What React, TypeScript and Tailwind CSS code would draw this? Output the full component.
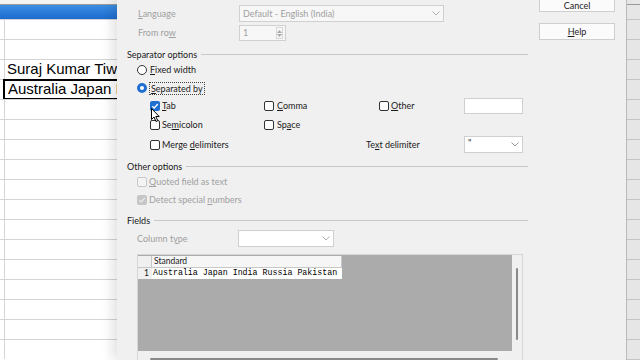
import React from "react";

function Box({ checked = false, disabled = false }: { checked?: boolean; disabled?: boolean }) {
  if (checked && !disabled) {
    return (
      <span className="w-[10px] h-[10px] rounded-[2px] bg-[#1f6fd1] flex items-center justify-center shrink-0">
        <svg width="8" height="8" viewBox="0 0 8 8">
          <path d="M1.3 4.2 L3.2 6 L6.8 2" stroke="#fff" strokeWidth="1.3" fill="none" />
        </svg>
      </span>
    );
  }
  if (checked && disabled) {
    return (
      <span className="w-[10px] h-[10px] rounded-[2px] bg-[#c6c6c6] flex items-center justify-center shrink-0">
        <svg width="8" height="8" viewBox="0 0 8 8">
          <path d="M1.3 4.2 L3.2 6 L6.8 2" stroke="#e8e8e8" strokeWidth="1.3" fill="none" />
        </svg>
      </span>
    );
  }
  return (
    <span
      className={
        disabled
          ? "w-[10px] h-[10px] rounded-[2px] border border-[#c8c8c8] bg-[#f4f4f4] shrink-0"
          : "w-[10px] h-[10px] rounded-[2px] border border-[#333] bg-white shrink-0"
      }
    />
  );
}

function Radio({ checked = false }: { checked?: boolean }) {
  return checked ? (
    <span className="w-[10px] h-[10px] rounded-full border-[3px] border-[#1f6fd1] bg-white shrink-0" />
  ) : (
    <span className="w-[10px] h-[10px] rounded-full border border-[#333] bg-white shrink-0" />
  );
}

function Chevron({ color = "#888" }: { color?: string }) {
  return (
    <svg width="8" height="5" viewBox="0 0 8 5">
      <path d="M0.5 0.5 L4 4 L7.5 0.5" stroke={color} strokeWidth="1" fill="none" />
    </svg>
  );
}

function Heading({ children }: { children: React.ReactNode }) {
  return (
    <div className="h-[15px] flex items-center">
      <span className="text-[#1a1a1a]">{children}</span>
      <span className="flex-1 h-px bg-[#c9c9c9] ml-[4px]" />
    </div>
  );
}

function Sheet() {
  const rows = Array.from({ length: 17 });
  return (
    <div className="w-[117px] h-[360px] bg-white relative overflow-hidden font-['Liberation_Sans',sans-serif] shrink-0">
      <div className="h-[5px] bg-[#f2f2f2] border-b border-[#9a9a9a]" />
      <div className="h-[14px] bg-gradient-to-b from-[#3b8de2] to-[#1b6cd0]" />
      {rows.map((_, i) => (
        <div key={i} className="h-[20px] border-t border-[#d4d4d4] pl-[4px]">
          <div className="h-full border-l border-[#d4d4d4]">
            {i === 2 && (
              <div className="h-full flex items-center pl-[2px] text-[15px] text-black whitespace-nowrap">
                Suraj Kumar Tiwari
              </div>
            )}
            {i === 3 && (
              <div className="h-[21px] -mt-px -ml-[2px] w-[140px] border-2 border-black flex items-center pl-[3px] text-[15px] text-black whitespace-nowrap">
                Australia Japan India
              </div>
            )}
          </div>
        </div>
      ))}
    </div>
  );
}

function RightStrip() {
  const rows = Array.from({ length: 18 });
  return (
    <div className="w-[14px] h-[360px] bg-[#e6e6e6] border-l border-[#bdbdbd] shrink-0 overflow-hidden">
      <div className="h-[5px] border-b border-[#9a9a9a]" />
      <div className="h-[14px]" />
      {rows.map((_, i) => (
        <div key={i} className="h-[20px] border-t border-[#c4c4c4]" />
      ))}
    </div>
  );
}

function Preview() {
  return (
    <div className="ml-[10px] mt-[7px] w-[386px] h-[110px] border border-[#d6d6d6] bg-[#f0f0f0] flex flex-col">
      <div className="flex h-[98px]">
        <div className="w-[374px] h-full bg-[#ababab]">
          <div className="flex h-[12px] mt-[1px]">
            <div className="w-[14px] bg-[#f0f0f0] border-r border-b border-[#c8c8c8]" />
            <div className="w-[190px] bg-[#f6f6f6] border-b border-r border-[#c8c8c8] flex items-center pl-[2px] text-[8.5px] text-[#1a1a1a]">
              Standard
            </div>
          </div>
          <div className="flex h-[11px]">
            <div className="w-[14px] bg-[#f0f0f0] flex items-center justify-end pr-[3px] text-[8.5px] text-[#1a1a1a]">1</div>
            <div className="w-[190px] bg-white flex items-center pl-px font-['Liberation_Mono',monospace] text-[8.3px] text-black whitespace-nowrap overflow-hidden">
              Australia Japan India Russia Pakistan
            </div>
          </div>
        </div>
        <div className="flex-1 flex justify-center pt-[13px]">
          <div className="w-[2px] h-[72px] rounded bg-[#8a8a8a]" />
        </div>
      </div>
      <div className="h-[12px] flex items-center pl-[12px]">
        <div className="w-[348px] h-[2px] rounded bg-[#8a8a8a] mt-[3px]" />
      </div>
    </div>
  );
}

function Dialog() {
  const dis = "text-[#a0a0a0]";
  return (
    <div className="w-[509px] h-[360px] overflow-hidden bg-[#f0f0f0] flex pl-[10px] shrink-0 relative shadow-[-6px_0_10px_rgba(0,0,0,0.10)] font-['Lato',sans-serif] text-[9px] text-[#1a1a1a]">
      <div className="w-[401px] flex flex-col pt-[5px] [&>*]:shrink-0">
        <div className="h-[17px] flex items-center pl-[11px]">
          <span className={`w-[101px] ${dis}`}><u>L</u>anguage</span>
          <div className="w-[205px] h-[17px] border border-[#d0d0d0] bg-[#f7f7f7] flex items-center justify-between px-[3px]">
            <span className={dis}>Default - English (India)</span>
            <Chevron color="#b0b0b0" />
          </div>
        </div>
        <div className="h-[16px] mt-[3px] flex items-center pl-[11px]">
          <span className={`w-[101px] ${dis}`}>From ro<u>w</u></span>
          <div className="w-[47px] h-[16px] border border-[#d0d0d0] bg-[#f7f7f7] flex items-center justify-between pl-[3px] pr-[2px]">
            <span className={dis}>1</span>
            <div className="h-[12px] w-[7px] border border-[#d6d6d6] flex flex-col items-center justify-center gap-[1px]">
              <svg width="5" height="3" viewBox="0 0 5 3"><path d="M0 3 L2.5 0 L5 3Z" fill="#a8a8a8" /></svg>
              <svg width="5" height="3" viewBox="0 0 5 3"><path d="M0 0 L2.5 3 L5 0Z" fill="#a8a8a8" /></svg>
            </div>
          </div>
        </div>
        <div className="mt-[6px]"><Heading>Separator options</Heading></div>
        <div className="h-[16px] flex items-center pl-[10px] gap-[2px]">
          <Radio />
          <span className="ml-[1px]"><u>F</u>ixed width</span>
        </div>
        <div className="h-[18px] mt-[1px] flex items-center pl-[10px] gap-[2px]">
          <Radio checked />
          <span className="px-px border border-dotted border-[#444] leading-[11px]"><u>S</u>eparated by</span>
        </div>
        <div className="h-[16px] mt-[1px] flex items-center pl-[23px]">
          <div className="w-[114px] flex items-center gap-[2px]"><Box checked /><span><u>T</u>ab</span></div>
          <div className="w-[115px] flex items-center gap-[3px]"><Box /><span><u>C</u>omma</span></div>
          <div className="w-[85px] flex items-center gap-[2px]"><Box /><span><u>O</u>ther</span></div>
          <div className="w-[59px] h-[16px] border border-[#cfcfcf] bg-white" />
        </div>
        <div className="h-[16px] mt-[3px] flex items-center pl-[23px]">
          <div className="w-[114px] flex items-center gap-[2px]"><Box /><span>Se<u>m</u>icolon</span></div>
          <div className="w-[115px] flex items-center gap-[3px]"><Box /><span>Sp<u>a</u>ce</span></div>
        </div>
        <div className="h-[17px] mt-[3px] flex items-center pl-[23px]">
          <div className="w-[216px] flex items-center gap-[2px]"><Box /><span>Merge <u>d</u>elimiters</span></div>
          <span className="w-[98px]">Te<u>x</u>t delimiter</span>
          <div className="w-[59px] h-[17px] border border-[#cfcfcf] bg-white flex items-center justify-between px-[3px]">
            <span className="-mt-[3px]">"</span>
            <Chevron color="#999" />
          </div>
        </div>
        <div className="mt-[6px]"><Heading>Other options</Heading></div>
        <div className="h-[16px] flex items-center pl-[10px] gap-[2px]">
          <Box disabled />
          <span className={dis}><u>Q</u>uoted field as text</span>
        </div>
        <div className="h-[16px] mt-[2px] flex items-center pl-[10px] gap-[2px]">
          <Box checked disabled />
          <span className={dis}>Detect special <u>n</u>umbers</span>
        </div>
        <div className="mt-[5px]"><Heading>Fields</Heading></div>
        <div className="h-[17px] mt-[2px] flex items-center pl-[10px]">
          <span className={`w-[101px] ${dis}`}>Column t<u>y</u>pe</span>
          <div className="w-[96px] h-[17px] border border-[#cfcfcf] bg-white flex items-center justify-end px-[3px]">
            <Chevron color="#b0b0b0" />
          </div>
        </div>
        <Preview />
      </div>
      <div className="w-[76px] ml-[11px] flex flex-col [&>*]:shrink-0">
        <div className="h-[13px] -mt-[1px] border border-[#cfcfcf] bg-[#fbfbfb] flex items-center justify-center">Cancel</div>
        <div className="h-[17px] mt-[11px] border border-[#cfcfcf] bg-[#fbfbfb] flex items-center justify-center"><span><u>H</u>elp</span></div>
      </div>
      <svg className="absolute left-[34px] top-[108px]" width="10" height="15" viewBox="0 0 10 15">
        <path d="M0.5 0.5 L0.5 11.5 L3 9 L5 13.5 L6.8 12.7 L4.8 8.5 L8.2 8.5 Z" fill="#fff" stroke="#000" strokeWidth="1" />
      </svg>
    </div>
  );
}

export default function App() {
  return (
    <div className="w-[640px] h-[360px] overflow-hidden flex bg-white">
      <Sheet />
      <Dialog />
      <RightStrip />
    </div>
  );
}
